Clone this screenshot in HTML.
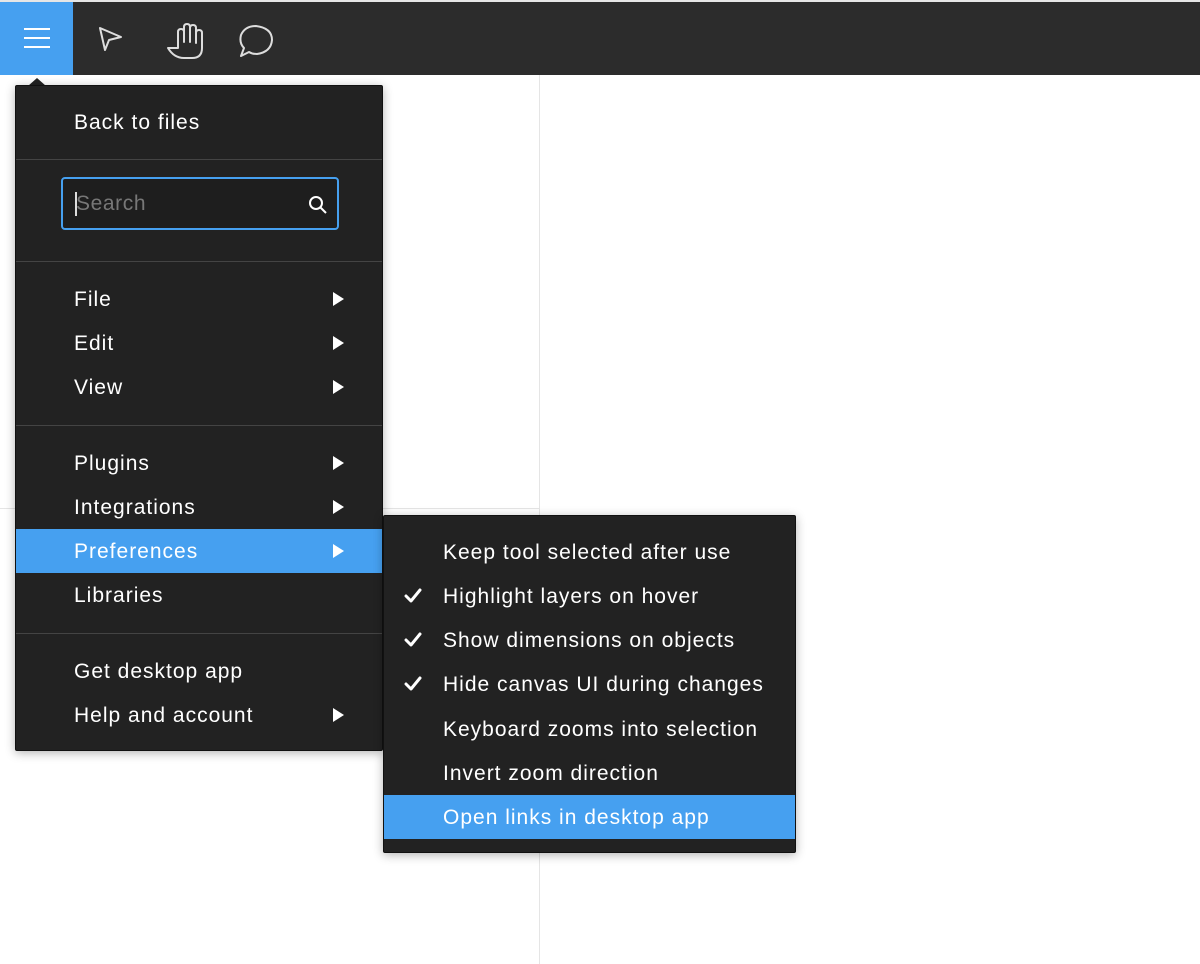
<!DOCTYPE html>
<html><head><style>
*{margin:0;padding:0;box-sizing:border-box}
body{width:1200px;height:964px;background:#fff;position:relative;overflow:hidden;font-family:"Liberation Sans",sans-serif;color:#fff}
.top{position:absolute;left:0;top:2px;width:1200px;height:73px;background:#2c2c2c}
.bar0{position:absolute;left:0;top:0;width:1200px;height:2px;background:#e6e6e6}
.mb{position:absolute;left:0;top:2px;width:73px;height:73px;background:#46a0f0}
.vl{position:absolute;left:539px;top:75px;width:1px;height:889px;background:#e5e5e5}
.hl{position:absolute;left:0;top:508px;width:539px;height:1px;background:#e5e5e5}
.menu{position:absolute;background:#222;border-radius:2px;box-shadow:0 2px 10px rgba(0,0,0,.3);border:1px solid #111}
.it{position:absolute;left:0;right:0;height:44px;line-height:45px;font-size:21px;letter-spacing:1px;white-space:nowrap}
.it.h{background:#46a0f0}
.sep{position:absolute;left:0;right:0;height:1px;background:#444}
.tri{position:absolute;width:0;height:0;border-top:7px solid transparent;border-bottom:7px solid transparent;border-left:11px solid #fff}
</style></head><body>
<div class="bar0"></div>
<div class="top"></div>
<div class="mb"><svg width="73" height="73"><g stroke="#fff" stroke-width="2"><line x1="24" y1="27" x2="50" y2="27"/><line x1="24" y1="36" x2="50" y2="36"/><line x1="24" y1="45" x2="50" y2="45"/></g></svg></div>
<svg style="position:absolute;left:90px;top:20px" width="190" height="42" fill="none" stroke="#ddd" stroke-width="2" stroke-linejoin="round">
<path d="M10 8 L15 30 L19 20 L31 17 Z"/>
<path d="M94 38 Q84 38 78 28 L88 28 L88 12 Q88 9 91 9 Q94 9 94 12 L94 22 L94 7 Q94 4 97 4 Q100 4 100 7 L100 22 L100 8 Q100 5 103 5 Q106 5 106 8 L106 23 L106 13 Q106 10 109 10 Q112 10 112 13 L112 28 Q112 38 102 38 Z"/>
<path d="M151 36 L154 28 Q149 23 151 15 Q155 6 166 6 Q182 8 182 20 Q181 32 167 34 Q162 34 159 32 Z"/>
</svg>
<div class="vl"></div><div class="hl"></div>
<div style="position:absolute;left:28px;top:78px;width:0;height:0;border-left:9px solid transparent;border-right:9px solid transparent;border-bottom:8px solid #222"></div>
<div class="menu" style="left:15px;top:85px;width:368px;height:666px">
<div class="it" style="top:14px;padding-left:58px">Back to files</div>
<div class="sep" style="top:73px"></div>
<div style="position:absolute;left:45px;top:91px;width:278px;height:53px;border:2px solid #46a0f0;border-radius:4px;background:#1e1e1e">
<div style="position:absolute;left:12px;top:13px;width:1.5px;height:24px;background:#ddd"></div>
<div style="position:absolute;left:13px;top:0;line-height:49px;font-size:21px;letter-spacing:0.6px;color:#777">Search</div>
<svg style="position:absolute;left:244px;top:15px" width="22" height="22" fill="none" stroke="#fff" stroke-width="2"><circle cx="9" cy="9" r="6"/><line x1="13.5" y1="13.5" x2="19" y2="19"/></svg>
</div>
<div class="sep" style="top:175px"></div>
<div class="it" style="top:191px;padding-left:58px">File<span class="tri" style="left:317px;top:15px"></span></div>
<div class="it" style="top:235px;padding-left:58px">Edit<span class="tri" style="left:317px;top:15px"></span></div>
<div class="it" style="top:279px;padding-left:58px">View<span class="tri" style="left:317px;top:15px"></span></div>
<div class="sep" style="top:339px"></div>
<div class="it" style="top:355px;padding-left:58px">Plugins<span class="tri" style="left:317px;top:15px"></span></div>
<div class="it" style="top:399px;padding-left:58px">Integrations<span class="tri" style="left:317px;top:15px"></span></div>
<div class="it h" style="top:443px;padding-left:58px">Preferences<span class="tri" style="left:317px;top:15px"></span></div>
<div class="it" style="top:487px;padding-left:58px">Libraries</div>
<div class="sep" style="top:547px"></div>
<div class="it" style="top:563px;padding-left:58px">Get desktop app</div>
<div class="it" style="top:607px;padding-left:58px">Help and account<span class="tri" style="left:317px;top:15px"></span></div>
</div>
<div class="menu" style="left:383px;top:515px;width:413px;height:338px">
<div class="it" style="top:14px;padding-left:59px">Keep tool selected after use</div>
<div class="it" style="top:58px;padding-left:59px">Highlight layers on hover</div>
<div class="it" style="top:102px;padding-left:59px">Show dimensions on objects</div>
<div class="it" style="top:146px;padding-left:59px">Hide canvas UI during changes</div>
<div class="it" style="top:191px;padding-left:59px">Keyboard zooms into selection</div>
<div class="it" style="top:235px;padding-left:59px">Invert zoom direction</div>
<div class="it h" style="top:279px;padding-left:59px">Open links in desktop app</div>
<svg style="position:absolute;left:20px;top:70px" width="20" height="110" fill="none" stroke="#fff" stroke-width="3" stroke-linecap="round" stroke-linejoin="round">
<path d="M2 10 L7 15 L16 4"/><path d="M2 54 L7 59 L16 48"/><path d="M2 98 L7 103 L16 92"/></svg>
</div>
</body></html>
